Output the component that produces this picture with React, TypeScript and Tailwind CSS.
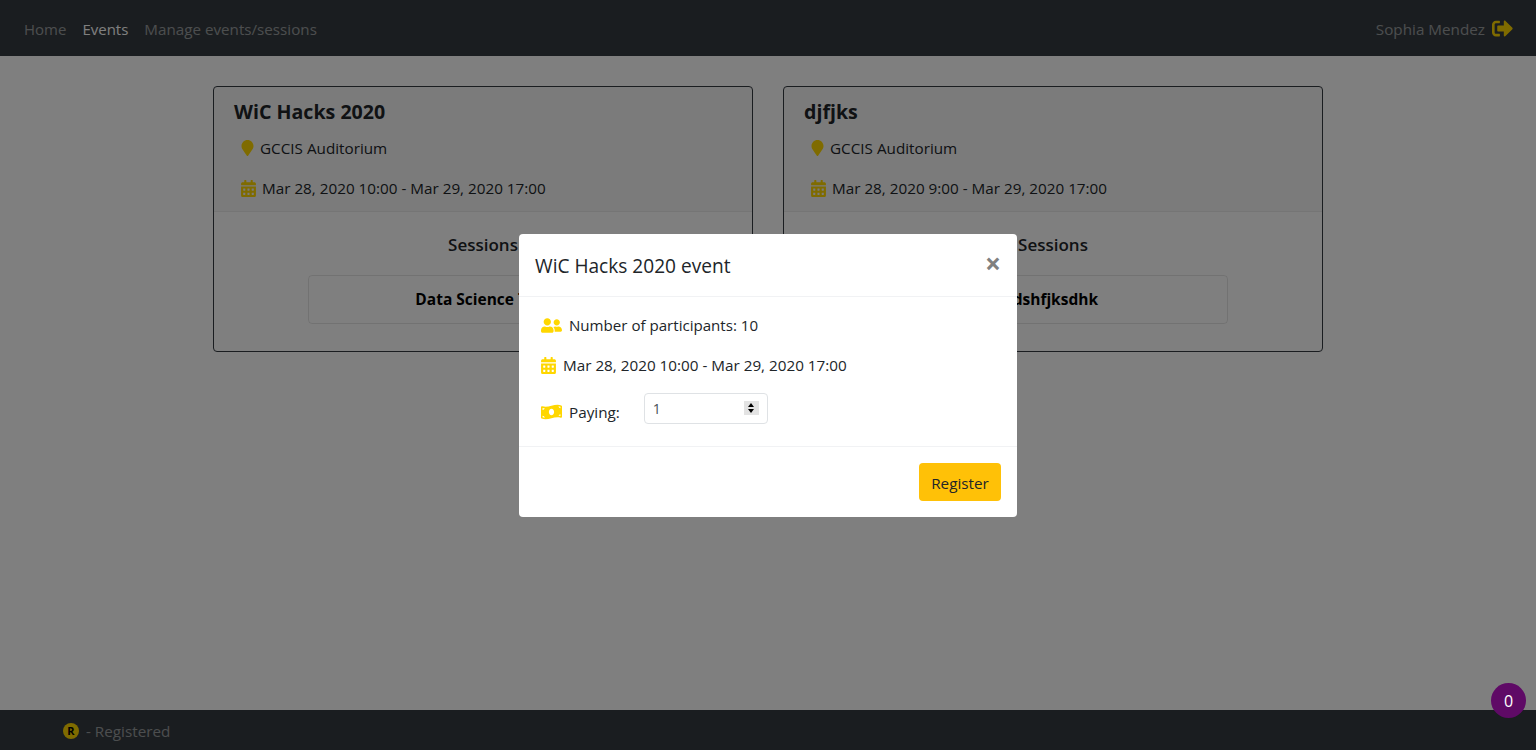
import { FaCalendarAlt, FaMapMarker, FaMoneyBillWave, FaSignOutAlt, FaUserFriends } from "react-icons/fa";

const EventCard = ({ title, date, session }: { title: string; date: string; session: string }) => {
    return (
        <div className="h-[266px] w-[540px] overflow-hidden rounded-[4px] border border-[#343a40] bg-white">
            <div className="h-[125px] border-b border-black/5 bg-black/[0.03] px-5 pt-[10px]">
                <h5 className="text-[19.6px] leading-[30px] font-bold text-[#212529]">{title}</h5>
                <div className="mt-[9px] flex h-6 items-center pl-[7px] text-[#212529]">
                    <FaMapMarker className="h-4 w-[13px] text-[#ffd700]" />
                    <span className="ml-[6px] text-[15.25px]">GCCIS Auditorium</span>
                </div>
                <div className="mt-4 flex h-6 items-center pl-[7px] text-[#212529]">
                    <FaCalendarAlt className="h-[17px] w-[15px] text-[#ffd700]" />
                    <span className="ml-[6px] text-[15.25px]">{date}</span>
                </div>
            </div>
            <div className="flex flex-col items-center pt-[21px]">
                <p className="text-[17px] leading-6 font-semibold text-[#212529]">Sessions</p>
                <div className="mt-[18px] flex h-[49px] w-[350px] items-center justify-center rounded-[4px] border border-black/10 pt-px text-[15.5px] font-bold text-black">
                    {session}
                </div>
            </div>
        </div>
    );
};

export default function App() {
    return (
        <div className="flex h-screen flex-col bg-white font-['Open_Sans','Noto_Sans',sans-serif]">
            <nav className="flex h-14 items-center justify-between bg-[#343a40] pt-[2px] pr-[23px] pl-6 text-[15px]">
                <div className="flex gap-4">
                    <span className="text-white/50">Home</span>
                    <span className="text-white">Events</span>
                    <span className="text-[15.2px] text-white/50">Manage events/sessions</span>
                </div>
                <div className="-mt-px flex items-center gap-[7px]">
                    <span className="mt-px text-[15.25px] text-white/50">Sophia Mendez</span>
                    <FaSignOutAlt className="h-[21px] w-[21px] text-[#ffd700]" />
                </div>
            </nav>
            <main className="flex flex-1 justify-center gap-[30px] pt-[30px]">
                <EventCard title="WiC Hacks 2020" date="Mar 28, 2020 10:00 - Mar 29, 2020 17:00" session="Data Science Talk" />
                <EventCard title="djfjks" date="Mar 28, 2020 9:00 - Mar 29, 2020 17:00" session="jdshfjksdhk" />
            </main>
            <footer className="flex h-10 items-center bg-[#343a40] pt-[2px] pl-[63px] text-[15.25px]">
                <span className="flex h-4 w-4 items-center justify-center rounded-full bg-[#ffd700] text-[11px] font-bold text-black">R</span>
                <span className="ml-[7px] text-white/50">- Registered</span>
            </footer>

            <div className="fixed inset-0 z-10 flex justify-center bg-black/50 pt-[234px]">
                <div className="h-[283px] w-[498px] rounded-[4px] bg-white text-[#212529]">
                    <div className="flex h-[63px] items-start justify-between border-b border-[#f1f2f4] pt-[17px] pr-4 pl-4">
                        <h5 className="text-[19.1px] leading-[30px]">WiC Hacks 2020 event</h5>
                        <span className="text-[28px] leading-[24px] font-bold text-[#808080]">×</span>
                    </div>
                    <div className="h-[150px] border-b border-[#f1f2f4] pt-4 pl-[22px] text-[15.25px]">
                        <div className="flex h-6 items-center">
                            <FaUserFriends className="h-[17px] w-[21px] text-[#ffd700]" />
                            <span className="ml-[7px] text-[15.1px]">Number of participants: 10</span>
                        </div>
                        <div className="mt-4 flex h-6 items-center">
                            <FaCalendarAlt className="h-[17px] w-[15px] text-[#ffd700]" />
                            <span className="ml-[7px]">Mar 28, 2020 10:00 - Mar 29, 2020 17:00</span>
                        </div>
                        <div className="mt-4 flex items-start">
                            <div className="mt-[7px] flex h-6 items-center">
                                <FaMoneyBillWave className="h-[18px] w-[21px] text-[#ffd700]" />
                                <span className="ml-[7px]">Paying:</span>
                            </div>
                            <div className="relative ml-[24px]">
                                <input
                                    type="text"
                                    defaultValue="1"
                                    className="h-[31px] w-[124px] rounded-[4px] border border-[#dfe2e5] px-2 text-[14px] text-[#495057]"
                                />
                                <span className="absolute top-2 right-[9px] flex h-[14px] w-[15px] flex-col items-center justify-center gap-[2px] bg-[#e3e3e3]">
                                    <span className="h-0 w-0 border-x-[3px] border-b-[4px] border-x-transparent border-b-black" />
                                    <span className="h-0 w-0 border-x-[3px] border-t-[4px] border-x-transparent border-t-black" />
                                </span>
                            </div>
                        </div>
                    </div>
                    <div className="flex justify-end px-4 pt-4">
                        <button className="h-[38px] w-[82px] rounded-[4px] bg-[#ffc107] pt-[2px] text-[15.25px] text-[#212529]">Register</button>
                    </div>
                </div>
            </div>
            <div className="fixed right-[10px] bottom-[32px] z-20 flex h-[35px] w-[35px] items-center justify-center rounded-full bg-[#5f0a66] text-[16px] text-white">0</div>
        </div>
    );
}
